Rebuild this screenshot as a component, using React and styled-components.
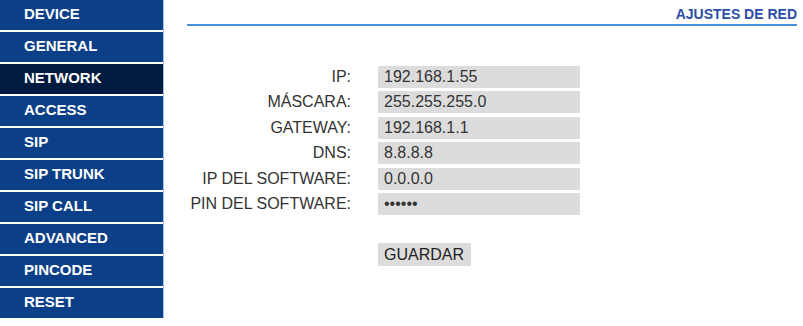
import styled, { createGlobalStyle } from "styled-components";

const GlobalStyle = createGlobalStyle`
  body {
    margin: 0;
    background: #ffffff;
    font-family: "Liberation Sans", Arial, sans-serif;
  }
`;

const Page = styled.div`
  display: flex;
  width: 803px;
  height: 326px;
`;

const Sidebar = styled.nav`
  width: 163px;
  display: flex;
  flex-direction: column;
  gap: 2px;
  border-right: 1px solid #9ec0ea;
  align-self: flex-start;
`;

const NavItem = styled.div`
  height: 30px;
  line-height: 28px;
  padding-left: 24px;
  background: ${(p) => (p.$active ? "#011a40" : "#0b3f87")};
  color: #ffffff;
  font-size: 15px;
  font-weight: bold;
`;

const Main = styled.main`
  flex: 1;
  padding: 0 6px 0 23px;
`;

const Header = styled.div`
  border-bottom: 2px solid #4a8fdc;
  height: 24px;
  display: flex;
  justify-content: flex-end;
  align-items: flex-start;
`;

const Title = styled.h1`
  margin: 6px 0 0;
  font-size: 14px;
  font-weight: bold;
  color: #2a4ea6;
`;

const Form = styled.div`
  margin-top: 40px;
  display: grid;
  grid-template-columns: 164px 202px;
  column-gap: 27px;
  row-gap: 3.4px;
`;

const Label = styled.div`
  text-align: right;
  font-size: 16px;
  color: #333333;
  line-height: 22px;
  white-space: nowrap;
`;

const Value = styled.div`
  background: #dcdcdc;
  height: 22px;
  line-height: 22px;
  padding-left: 6px;
  font-size: 16px;
  color: #333333;
`;

const Button = styled.button`
  grid-column: 2;
  justify-self: start;
  margin-top: 25px;
  width: 93px;
  height: 23px;
  border: none;
  padding: 0 0 0 6px;
  text-align: left;
  background: #dcdcdc;
  font-family: "Liberation Sans", Arial, sans-serif;
  font-size: 16px;
  color: #222222;
`;

const menu = [
  "DEVICE",
  "GENERAL",
  "NETWORK",
  "ACCESS",
  "SIP",
  "SIP TRUNK",
  "SIP CALL",
  "ADVANCED",
  "PINCODE",
  "RESET",
];

const fields = [
  ["IP:", "192.168.1.55"],
  ["MÁSCARA:", "255.255.255.0"],
  ["GATEWAY:", "192.168.1.1"],
  ["DNS:", "8.8.8.8"],
  ["IP DEL SOFTWARE:", "0.0.0.0"],
  ["PIN DEL SOFTWARE:", "••••••"],
];

export default function App() {
  return (
    <>
      <GlobalStyle />
      <Page>
        <Sidebar>
          {menu.map((m) => (
            <NavItem key={m} $active={m === "NETWORK"}>
              {m}
            </NavItem>
          ))}
        </Sidebar>
        <Main>
          <Header>
            <Title>AJUSTES DE RED</Title>
          </Header>
          <Form>
            {fields.map(([l, v]) => (
              <>
                <Label key={l + "l"}>{l}</Label>
                <Value key={l + "v"}>{v}</Value>
              </>
            ))}
            <Button>GUARDAR</Button>
          </Form>
        </Main>
      </Page>
    </>
  );
}
